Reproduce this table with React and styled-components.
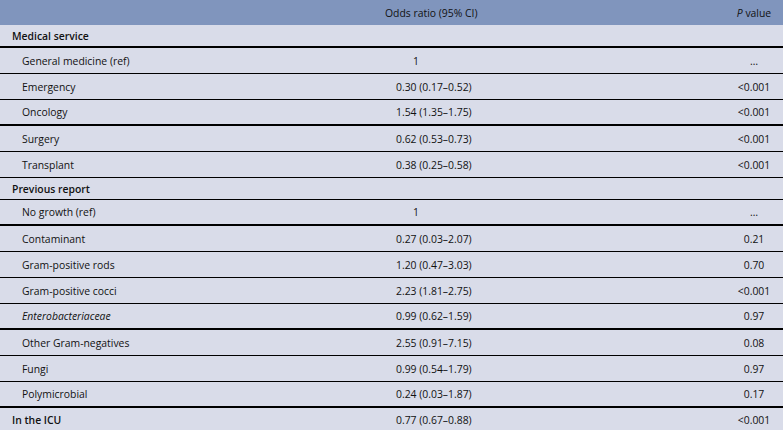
import styled, { createGlobalStyle } from 'styled-components';

const GlobalStyle = createGlobalStyle`
  html, body {
    margin: 0;
    padding: 0;
    background: #d9dce9;
  }
  body {
    font-family: 'Open Sans', 'Liberation Sans', sans-serif;
    color: #111;
  }
`;

const Table = styled.div`
  width: 783px;
  height: 430px;
  overflow: hidden;
  background: #d9dce9;
  font-size: 10.4px;
`;

const Row = styled.div`
  display: grid;
  grid-template-columns: 385px 340px 58px;
  align-items: center;
  height: ${(p) => p.$h}px;
  box-sizing: border-box;
  background: ${(p) => (p.$head ? '#8095bd' : 'transparent')};
  border-bottom: ${(p) => (p.$line ? `${p.$line}px solid #000` : 'none')};
`;

const Label = styled.div`
  padding-left: ${(p) => (p.$group ? 12 : 22)}px;
  font-weight: ${(p) => (p.$group ? 600 : 400)};
  font-style: ${(p) => (p.$italic ? 'italic' : 'normal')};
  white-space: nowrap;
`;

const Odds = styled.div`
  padding-left: ${(p) => p.$pad}px;
  white-space: nowrap;
`;

const PVal = styled.div`
  text-align: center;
  white-space: nowrap;
`;

const rows = [
  { label: 'Medical service', group: true, h: 23, line: 2 },
  { label: 'General medicine (ref)', or: '1', p: '…', ref: true, h: 26, line: 1 },
  { label: 'Emergency', or: '0.30 (0.17–0.52)', p: '<0.001', h: 26, line: 1 },
  { label: 'Oncology', or: '1.54 (1.35–1.75)', p: '<0.001', h: 26, line: 2 },
  { label: 'Surgery', or: '0.62 (0.53–0.73)', p: '<0.001', h: 26, line: 1 },
  { label: 'Transplant', or: '0.38 (0.25–0.58)', p: '<0.001', h: 26, line: 1 },
  { label: 'Previous report', group: true, h: 22, line: 1 },
  { label: 'No growth (ref)', or: '1', p: '…', ref: true, h: 26, line: 2 },
  { label: 'Contaminant', or: '0.27 (0.03–2.07)', p: '0.21', h: 26, line: 1 },
  { label: 'Gram-positive rods', or: '1.20 (0.47–3.03)', p: '0.70', h: 26, line: 1 },
  { label: 'Gram-positive cocci', or: '2.23 (1.81–2.75)', p: '<0.001', h: 26, line: 1 },
  { label: 'Enterobacteriaceae', italic: true, or: '0.99 (0.62–1.59)', p: '0.97', h: 26, line: 2 },
  { label: 'Other Gram-negatives', or: '2.55 (0.91–7.15)', p: '0.08', h: 26, line: 1 },
  { label: 'Fungi', or: '0.99 (0.54–1.79)', p: '0.97', h: 26, line: 1 },
  { label: 'Polymicrobial', or: '0.24 (0.03–1.87)', p: '0.17', h: 26, line: 2 },
  { label: 'In the ICU', group: true, or: '0.77 (0.67–0.88)', p: '<0.001', h: 23 },
];

export default function App() {
  return (
    <>
      <GlobalStyle />
      <Table>
        <Row $head $h={25}>
          <Label />
          <Odds $pad={0}>Odds ratio (95% CI)</Odds>
          <PVal>
            <i>P</i> value
          </PVal>
        </Row>
        {rows.map((r, i) => (
          <Row key={i} $h={r.h} $line={r.line}>
            <Label $group={r.group} $italic={r.italic}>{r.label}</Label>
            <Odds $pad={r.ref ? 28 : 11}>{r.or}</Odds>
            <PVal>{r.p}</PVal>
          </Row>
        ))}
      </Table>
    </>
  );
}
